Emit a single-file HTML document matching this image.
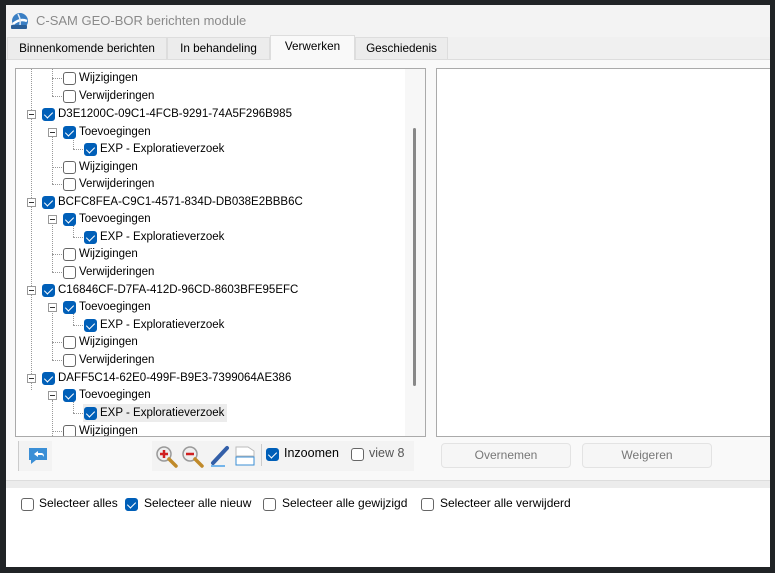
<!DOCTYPE html>
<html><head><meta charset="utf-8"><style>
*{box-sizing:border-box;margin:0;padding:0}
body{width:775px;height:573px;background:#202326;position:relative;overflow:hidden;font-family:"Liberation Sans",sans-serif;font-size:12px;color:#000}
.win{position:absolute;left:6px;top:5px;width:764px;height:562px;background:#f0f0f0}
.a{position:absolute}
.cb{position:absolute;width:13px;height:13px;border:1px solid #666;border-radius:3px;background:#fff}
.cb.on{background:#005fb8;border-color:#005fb8}
.cb.on::after{content:"";position:absolute;left:3px;top:1px;width:4px;height:7px;border:solid #fff;border-width:0 1.5px 1.5px 0;transform:rotate(45deg)}
.r{position:absolute;height:18px;line-height:18px;white-space:nowrap;font-size:11.5px}
.exp{position:absolute;width:9px;height:9px;border:1px solid #999;background:#fff}
.exp::after{content:"";position:absolute;left:1px;top:3px;width:5px;height:1px;background:#333}
.vl{position:absolute;border-left:1px dotted #999;width:0}
.hl{position:absolute;border-top:1px dotted #999;height:0}
.btn{position:absolute;height:25px;border:1px solid #e3e3e3;border-radius:4px;background:#f6f6f6;color:#777;text-align:center;line-height:23px;font-size:12px}
.tab{position:absolute;top:37px;height:22px;line-height:22px;text-align:center;border:1px solid #ddd;border-bottom:none;background:#ececec;font-size:11.7px}
</style></head><body>
<div class="win"></div>
<div class="a" style="left:6px;top:5px;width:764px;height:32px;background:#f3f3f3"></div>
<svg class="a" style="left:10px;top:12px" width="19" height="19" viewBox="0 0 19 19"><circle cx="10" cy="9" r="8" fill="#3a7fc4"/><path d="M3 12 Q10 6 17 9" stroke="#fff" stroke-width="2.5" fill="none"/><path d="M8 2 Q12 9 9 17" stroke="#dfe9f5" stroke-width="1.5" fill="none"/><rect x="1" y="13" width="16" height="4" rx="1" fill="#2a5f98"/></svg>
<div class="a" style="left:36px;top:13px;color:#8a8a8a;font-size:13px">C-SAM GEO-BOR berichten module</div>
<div class="a" style="left:6px;top:59px;width:764px;height:421px;background:#f9f9f9;border-top:1px solid #ddd"></div>
<div class="tab" style="left:7px;width:160px">Binnenkomende berichten</div>
<div class="tab" style="left:167px;width:103px">In behandeling</div>
<div class="tab" style="left:270px;width:85px;top:35px;height:25px;background:#f9f9f9">Verwerken</div>
<div class="tab" style="left:355px;width:93px">Geschiedenis</div>
<div class="a" style="left:15px;top:68px;width:411px;height:369px;background:#fff;border:1px solid #aaa;overflow:hidden">
<div class="a" style="right:0;top:0;width:20px;height:367px;background:#f7f7f7"></div>
<div class="a" style="left:397px;top:59px;width:3px;height:258px;background:#888;border-radius:2px"></div>
</div>
<div class="a" style="left:16px;top:69px;width:389px;height:367px;overflow:hidden">
<div style="position:absolute;left:-16px;top:-69px;width:420px;height:510px">
<div class="vl" style="left:31px;top:60px;height:330px"></div>
<div class="vl" style="left:52px;top:60px;height:36px"></div>
<div class="vl" style="left:52px;top:137px;height:47px"></div>
<div class="vl" style="left:52px;top:225px;height:47px"></div>
<div class="vl" style="left:52px;top:313px;height:47px"></div>
<div class="vl" style="left:52px;top:400px;height:40px"></div>
<div class="vl" style="left:73px;top:137px;height:12px"></div>
<div class="vl" style="left:73px;top:225px;height:12px"></div>
<div class="vl" style="left:73px;top:313px;height:12px"></div>
<div class="vl" style="left:73px;top:400px;height:13px"></div>
<div class="hl" style="left:52px;top:78px;width:10px"></div><div class="cb" style="left:63px;top:72px"></div><div class="r" style="left:79px;top:69px">Wijzigingen</div>
<div class="hl" style="left:52px;top:96px;width:10px"></div><div class="cb" style="left:63px;top:90px"></div><div class="r" style="left:79px;top:87px">Verwijderingen</div>
<div class="exp" style="left:27px;top:110px"></div><div class="cb on" style="left:42px;top:108px"></div><div class="r" style="left:58px;top:105px">D3E1200C-09C1-4FCB-9291-74A5F296B985</div>
<div class="exp" style="left:48px;top:128px"></div><div class="cb on" style="left:63px;top:126px"></div><div class="r" style="left:79px;top:123px">Toevoegingen</div>
<div class="hl" style="left:73px;top:149px;width:10px"></div><div class="cb on" style="left:84px;top:143px"></div><div class="r" style="left:100px;top:140px">EXP - Exploratieverzoek</div>
<div class="hl" style="left:52px;top:167px;width:10px"></div><div class="cb" style="left:63px;top:161px"></div><div class="r" style="left:79px;top:158px">Wijzigingen</div>
<div class="hl" style="left:52px;top:184px;width:10px"></div><div class="cb" style="left:63px;top:178px"></div><div class="r" style="left:79px;top:175px">Verwijderingen</div>
<div class="exp" style="left:27px;top:198px"></div><div class="cb on" style="left:42px;top:196px"></div><div class="r" style="left:58px;top:193px">BCFC8FEA-C9C1-4571-834D-DB038E2BBB6C</div>
<div class="exp" style="left:48px;top:215px"></div><div class="cb on" style="left:63px;top:213px"></div><div class="r" style="left:79px;top:210px">Toevoegingen</div>
<div class="hl" style="left:73px;top:237px;width:10px"></div><div class="cb on" style="left:84px;top:231px"></div><div class="r" style="left:100px;top:228px">EXP - Exploratieverzoek</div>
<div class="hl" style="left:52px;top:254px;width:10px"></div><div class="cb" style="left:63px;top:248px"></div><div class="r" style="left:79px;top:245px">Wijzigingen</div>
<div class="hl" style="left:52px;top:272px;width:10px"></div><div class="cb" style="left:63px;top:266px"></div><div class="r" style="left:79px;top:263px">Verwijderingen</div>
<div class="exp" style="left:27px;top:286px"></div><div class="cb on" style="left:42px;top:284px"></div><div class="r" style="left:58px;top:281px">C16846CF-D7FA-412D-96CD-8603BFE95EFC</div>
<div class="exp" style="left:48px;top:303px"></div><div class="cb on" style="left:63px;top:301px"></div><div class="r" style="left:79px;top:298px">Toevoegingen</div>
<div class="hl" style="left:73px;top:325px;width:10px"></div><div class="cb on" style="left:84px;top:319px"></div><div class="r" style="left:100px;top:316px">EXP - Exploratieverzoek</div>
<div class="hl" style="left:52px;top:342px;width:10px"></div><div class="cb" style="left:63px;top:336px"></div><div class="r" style="left:79px;top:333px">Wijzigingen</div>
<div class="hl" style="left:52px;top:360px;width:10px"></div><div class="cb" style="left:63px;top:354px"></div><div class="r" style="left:79px;top:351px">Verwijderingen</div>
<div class="exp" style="left:27px;top:374px"></div><div class="cb on" style="left:42px;top:372px"></div><div class="r" style="left:58px;top:369px">DAFF5C14-62E0-499F-B9E3-7399064AE386</div>
<div class="exp" style="left:48px;top:391px"></div><div class="cb on" style="left:63px;top:389px"></div><div class="r" style="left:79px;top:386px">Toevoegingen</div>
<div class="a" style="left:83px;top:404px;width:144px;height:18px;background:#ececec"></div>
<div class="hl" style="left:73px;top:413px;width:10px"></div><div class="cb on" style="left:84px;top:407px"></div><div class="r" style="left:100px;top:404px">EXP - Exploratieverzoek</div>
<div class="hl" style="left:52px;top:431px;width:10px"></div><div class="cb" style="left:63px;top:425px"></div><div class="r" style="left:79px;top:422px">Wijzigingen</div>
</div></div>
<div class="a" style="left:436px;top:68px;width:334px;height:369px;background:#fff;border:1px solid #aaa;border-right:none"></div>
<div class="a" style="left:18px;top:441px;width:34px;height:30px;background:#f3f3f3;border-left:1px solid #ccc"></div>
<svg class="a" style="left:28px;top:447px" width="20" height="18" viewBox="0 0 20 18"><path d="M1 1h18v12H8l-5 4v-4H1z" fill="#3b8fd6"/><path d="M6 7l4-3v2h3c2 0 3 1 3 4-1-2-2-2-3-2h-3v2z" fill="#fff"/></svg>
<div class="a" style="left:152px;top:441px;width:262px;height:30px;background:#f3f3f3"></div>
<svg class="a" style="left:155px;top:445px" width="24" height="24" viewBox="0 0 24 24"><circle cx="9" cy="9" r="7" fill="#eee" stroke="#999" stroke-width="1.5"/><path d="M14 14l7 7" stroke="#c08a2a" stroke-width="3.5" stroke-linecap="round"/><path d="M5 9h8M9 5v8" stroke="#d02020" stroke-width="2.5"/></svg>
<svg class="a" style="left:181px;top:445px" width="24" height="24" viewBox="0 0 24 24"><circle cx="9" cy="9" r="7" fill="#eee" stroke="#999" stroke-width="1.5"/><path d="M14 14l7 7" stroke="#c08a2a" stroke-width="3.5" stroke-linecap="round"/><path d="M5 9h8" stroke="#d02020" stroke-width="2.5"/></svg>
<svg class="a" style="left:207px;top:445px" width="24" height="24" viewBox="0 0 24 24"><path d="M20 3L6 18" stroke="#335fa8" stroke-width="4" stroke-linecap="round"/><path d="M4 21h14" stroke="#4aa0e8" stroke-width="1.5"/></svg>
<svg class="a" style="left:234px;top:445px" width="22" height="22" viewBox="0 0 22 22"><path d="M2 2h12l6 4v5H2z" fill="#fff" stroke="#bbb"/><path d="M2 12h18v8H2z" fill="#fff" stroke="#3b8fd6"/></svg>
<div class="a" style="left:261px;top:444px;width:1px;height:22px;background:#ccc"></div>
<div class="cb on" style="left:266px;top:448px"></div><div class="a" style="left:284px;top:446px;font-size:12.5px">Inzoomen</div>
<div class="cb" style="left:351px;top:448px;border-color:#666"></div><div class="a" style="left:369px;top:446px;color:#555;font-size:12.5px">view 8</div>
<div class="btn" style="left:441px;top:443px;width:130px">Overnemen</div>
<div class="btn" style="left:582px;top:443px;width:130px">Weigeren</div>
<div class="a" style="left:6px;top:480px;width:764px;height:8px;background:#ececec;border-top:1px solid #ddd"></div>
<div class="a" style="left:6px;top:488px;width:764px;height:79px;background:#fff"></div>
<div class="cb" style="left:21px;top:498px"></div><div class="a" style="left:39px;top:496px">Selecteer alles</div>
<div class="cb on" style="left:125px;top:498px"></div><div class="a" style="left:144px;top:496px">Selecteer alle nieuw</div>
<div class="cb" style="left:263px;top:498px"></div><div class="a" style="left:282px;top:496px">Selecteer alle gewijzigd</div>
<div class="cb" style="left:421px;top:498px"></div><div class="a" style="left:440px;top:496px">Selecteer alle verwijderd</div>
</body></html>
